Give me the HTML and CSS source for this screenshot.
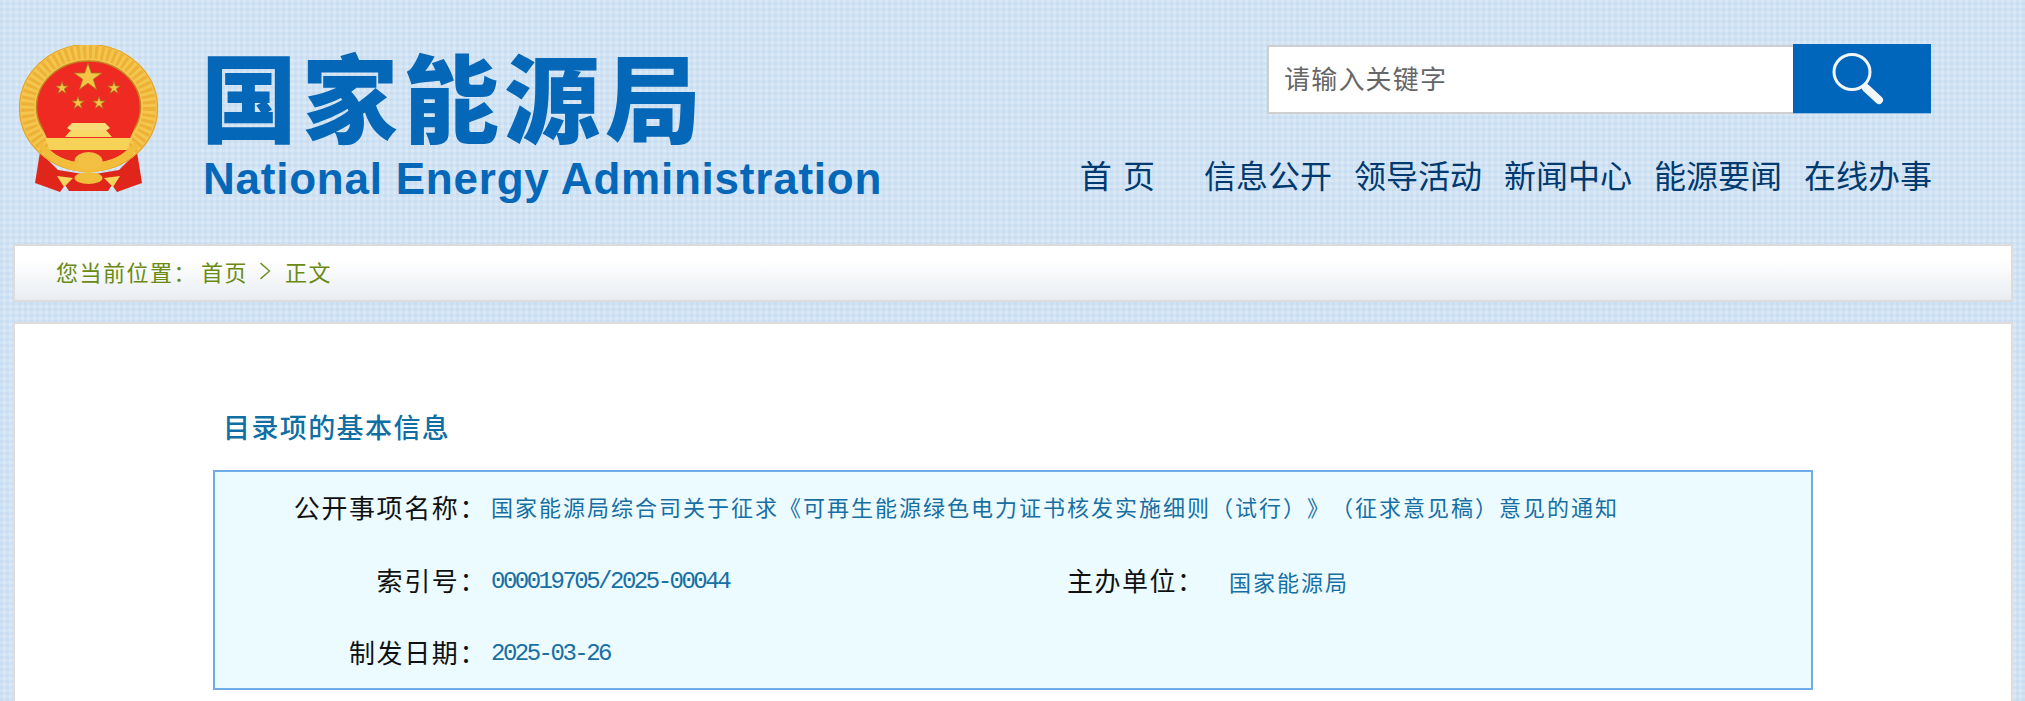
FILE: index.html
```html
<!DOCTYPE html>
<html lang="zh-CN">
<head>
<meta charset="utf-8">
<title>国家能源局</title>
<link rel="stylesheet" href="styles.css">
</head>
<body>
<header class="site-header">
  <a class="logo" href="#">
    <svg class="emblem" viewBox="0 0 139 147" aria-hidden="true">
      <path d="M21 107 L16 138 L41 147 L46 140 L50 146 L89 146 L93 140 L98 147 L123 138 L118 107 L100 125 L70 130 L39 125 Z" fill="#e0261b"/>
      <ellipse cx="69.500" cy="63" rx="69.500" ry="64" fill="#f4c64e"/>
      <ellipse cx="69.500" cy="63" rx="61" ry="56" fill="none" stroke="#e9a62b" stroke-width="13" stroke-dasharray="3 3" opacity="0.65"/>
      <ellipse cx="69.500" cy="63" rx="69" ry="63.500" fill="none" stroke="#e5a429" stroke-width="1.200"/>
      <ellipse cx="69.500" cy="62" rx="52" ry="46" fill="#ee2a22" stroke="#c48520" stroke-width="1.500"/>
      <path d="M22 73 C26 103 45 118 69.500 118 C94 118 113 103 117 73 Z" fill="#ee2a22"/>
      <path d="M26 93 H113 L108 105 H31 Z" fill="#f6d257"/>
      <path d="M31 105 H108 C100 113 85 118 69.500 118 C54 118 39 113 31 105 Z" fill="#e82a20"/>
      <path d="M46 92 L52 85 H87 L93 92 Z" fill="#f8d968"/>
      <path d="M48 83 L53 78 H86 L91 83 L88 85 H51 Z" fill="#f9dc78"/>
      <g fill="#f4c545" stroke="#a8741c" stroke-width="0.800">
        <path d="M69 18 L72.300 28 L83 28 L74.300 34.300 L77.600 44.500 L69 38.200 L60.400 44.500 L63.700 34.300 L55 28 L65.700 28 Z"/>
        <path d="M43 36.500 L44.500 41 L49.300 41 L45.400 43.800 L46.900 48.400 L43 45.600 L39.100 48.400 L40.600 43.800 L36.700 41 L41.500 41 Z"/>
        <path d="M95 36.500 L96.500 41 L101.300 41 L97.400 43.800 L98.900 48.400 L95 45.600 L91.100 48.400 L92.600 43.800 L88.700 41 L93.500 41 Z"/>
        <path d="M59 51.500 L60.500 56 L65.300 56 L61.400 58.800 L62.900 63.400 L59 60.600 L55.100 63.400 L56.600 58.800 L52.700 56 L57.500 56 Z"/>
        <path d="M80 51.500 L81.500 56 L86.300 56 L82.400 58.800 L83.900 63.400 L80 60.600 L76.100 63.400 L77.600 58.800 L73.700 56 L78.500 56 Z"/>
      </g>
      <path d="M19 101 C30 118 50 127 69.500 127 C89 127 109 118 120 101 L116 97 C106 111 88 119 69.500 119 C51 119 33 111 23 97 Z" fill="#f3bd3c"/>
      <ellipse cx="69.500" cy="116" rx="14" ry="9" fill="#f4c043"/>
      <path d="M38 131 L54 133 L45 142 Z M101 131 L85 133 L94 142 Z" fill="#f6d65e"/>
      <ellipse cx="69.500" cy="133" rx="14" ry="6" fill="#f3bd3c"/>
    </svg>
    <div class="brand">
      <div class="brand-cn">国家能源局</div>
      <div class="brand-en">National Energy Administration</div>
    </div>
  </a>
  <div class="header-right">
    <form class="search">
      <label class="search-field"><span>请输入关键字</span></label>
      <button class="search-btn" type="button" aria-label="搜索">
        <svg class="search-icon" viewBox="0 0 52 52" aria-hidden="true">
          <ellipse cx="20" cy="19" rx="18" ry="17.500" fill="none" stroke="#f2f7fc" stroke-width="3"/>
          <path d="M34 35 L47 47" fill="none" stroke="#f2f7fc" stroke-width="8" stroke-linecap="round"/>
        </svg>
      </button>
    </form>
    <nav class="main-nav">
      <a class="nav-home" href="#">首 页</a>
      <a href="#">信息公开</a>
      <a href="#">领导活动</a>
      <a href="#">新闻中心</a>
      <a href="#">能源要闻</a>
      <a href="#">在线办事</a>
    </nav>
  </div>
</header>

<div class="crumbs">
  <span class="crumb-lead">您当前位置：</span><a href="#">首页</a>
  <svg class="crumb-sep" viewBox="0 0 10 16" aria-hidden="true"><path d="M1 1 L9 8 L1 15" fill="none" stroke="#6d8f1f" stroke-width="1.200"/></svg>
  <a href="#">正文</a>
</div>

<main class="content">
  <h2 class="section-title">目录项的基本信息</h2>
  <div class="info-box">
    <div class="label first">公开事项名称：</div>
    <div class="value value-wide first">国家能源局综合司关于征求《可再生能源绿色电力证书核发实施细则（试行）》（征求意见稿）意见的通知</div>
    <div class="label">索引号：</div>
    <div class="value num">000019705/2025-00044</div>
    <div class="label label-second">主办单位：</div>
    <div class="value value-second">国家能源局</div>
    <div class="label">制发日期：</div>
    <div class="value num value-wide">2025-03-26</div>
  </div>
</main>
</body>
</html>
```
FILE: styles.css
```css
* { box-sizing: border-box; }

html, body {
  margin: 0;
  height: 701px;
  overflow: hidden;
}

body {
  background-color: #dbe9f7;
  background-image:
    repeating-linear-gradient(0deg, rgba(170, 200, 228, 0.2) 0 3px, transparent 3px 6px),
    repeating-linear-gradient(90deg, rgba(170, 200, 228, 0.2) 0 3px, transparent 3px 6px);
  font-family: "Noto Sans CJK SC", "Liberation Sans", sans-serif;
  text-spacing-trim: space-all;
}

a { color: inherit; text-decoration: none; }

.site-header {
  height: 244px;
  display: flex;
  justify-content: space-between;
  padding: 44px 93px 0 19px;
}

.logo {
  display: flex;
  align-items: flex-start;
  gap: 45px;
}

.emblem {
  width: 139px;
  height: 147px;
  margin-top: 1px;
  filter: blur(0.5px);
}

.brand { color: #0467b8; }

.brand-cn {
  margin: -2px 0 0 -2px;
  font-size: 96px;
  font-weight: 900;
  line-height: 104px;
  letter-spacing: 5px;
}

.brand-en {
  margin-top: 8px;
  font-family: "Liberation Sans", sans-serif;
  font-size: 44px;
  font-weight: 700;
  line-height: 50px;
  letter-spacing: 0.77px;
  white-space: nowrap;
}

.header-right {
  display: flex;
  flex-direction: column;
  align-items: flex-end;
}

.search {
  display: flex;
  align-items: stretch;
  height: 70px;
  margin-right: 1px;
}

.search-field {
  width: 526px;
  margin-top: 1px;
  display: flex;
  align-items: center;
  padding: 0 0 4px 15px;
  background: #fff;
  border: 2px solid #cfcfcf;
  border-right: 0;
  color: #666;
  font-size: 26px;
  letter-spacing: 1.200px;
}

.search-btn {
  width: 138px;
  padding: 0;
  display: flex;
  align-items: center;
  justify-content: center;
  background: #0066bb;
  border: 0;
  border-bottom: 1px solid #8fbde6;
}

.search-icon { width: 52px; height: 52px; margin-right: 8px; }

.main-nav {
  display: flex;
  gap: 22px;
  margin-top: 36px;
  color: #003a70;
  font-size: 32px;
  line-height: 48px;
}

.nav-home { margin-right: 27px; word-spacing: 4px; }

.crumbs {
  height: 58px;
  margin: 0 12px 0 13px;
  display: flex;
  align-items: center;
  padding: 0 0 4px 41px;
  background: linear-gradient(#fff 25%, #e9edf2);
  border: 2px solid #dcdcdc;
  color: #6a8a14;
  font-size: 22px;
  letter-spacing: 1.500px;
}

.crumb-lead { margin-right: 4px; }

.crumb-sep {
  width: 12px;
  height: 18px;
  margin: 0 14px 0 11px;
}

.content {
  height: 379px;
  margin: 20px 12px 0 13px;
  padding: 0 198px;
  background: #fff;
  border: 2px solid #e0dcdc;
  border-bottom: 0;
}

.section-title {
  margin: 0;
  padding: 83px 0 0 10px;
  color: #0f6fa5;
  font-size: 27px;
  font-weight: 500;
  line-height: 40px;
  letter-spacing: 1.400px;
}

.info-box {
  height: 220px;
  margin-top: 23px;
  display: grid;
  grid-template-columns: 276px 576px 162px 1fr;
  grid-auto-rows: 72px;
  padding-top: 1px;
  background: #ecfbff;
  border: 2px solid #6fabe8;
  align-items: center;
}

.label {
  justify-self: end;
  margin-bottom: 3px;
  padding-right: 4px;
  color: #111;
  font-size: 26px;
  letter-spacing: 1.600px;
  white-space: nowrap;
}

.label-second {
  justify-self: start;
  padding-right: 0;
  letter-spacing: 1.500px;
}

.value {
  color: #176fa3;
  font-size: 22px;
  letter-spacing: 2px;
  white-space: nowrap;
}

.value-wide { grid-column: 2 / -1; }

.num {
  font-family: "Liberation Mono", monospace;
  font-size: 24px;
  letter-spacing: -2.500px;
}

.first, .label.first { margin-bottom: 6px; }
```
